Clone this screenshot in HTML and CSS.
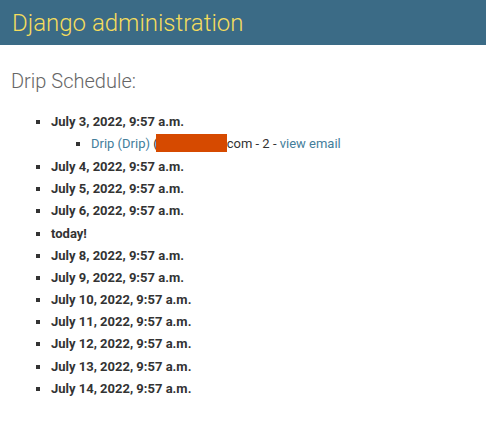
FILE: index.html
```html
<!DOCTYPE html>
<html>
<head>
<meta charset="utf-8">
<link rel="stylesheet" href="styles.css">
</head>
<body>
<div class="header"><h1 class="brand">Django administration</h1></div>
<div class="content">
  <h2 class="title">Drip Schedule:</h2>
  <ul class="days">
    <li><strong>July 3, 2022, 9:57 a.m.</strong>
      <ul class="sends">
        <li><a href="#">Drip (Drip)</a> (<span class="redact" aria-hidden="true"></span>com - 2 - <a href="#">view email</a></li>
      </ul>
    </li>
    <li><strong>July 4, 2022, 9:57 a.m.</strong></li>
    <li><strong>July 5, 2022, 9:57 a.m.</strong></li>
    <li><strong>July 6, 2022, 9:57 a.m.</strong></li>
    <li><strong>today!</strong></li>
    <li><strong>July 8, 2022, 9:57 a.m.</strong></li>
    <li><strong>July 9, 2022, 9:57 a.m.</strong></li>
    <li><strong>July 10, 2022, 9:57 a.m.</strong></li>
    <li><strong>July 11, 2022, 9:57 a.m.</strong></li>
    <li><strong>July 12, 2022, 9:57 a.m.</strong></li>
    <li><strong>July 13, 2022, 9:57 a.m.</strong></li>
    <li><strong>July 14, 2022, 9:57 a.m.</strong></li>
  </ul>
</div>
</body>
</html>
```
FILE: styles.css
```css
body {
  margin: 0;
  font-family: Roboto, "Liberation Sans", sans-serif;
  color: #333;
  background: #fff;
}
.header {
  height: 45px;
  background: #3b6b86;
  display: flex;
  align-items: center;
  padding: 0 12px;
}
.brand {
  margin: 0;
  font-size: 24px;
  font-weight: 300;
  color: #f5dd5d;
  line-height: 28px;
}
.content {
  padding: 24px 11px 20px;
}
.title {
  margin: 0 0 18px;
  font-size: 20px;
  font-weight: 300;
  color: #666;
  line-height: 24px;
}
.days, .sends {
  margin: 0;
  padding-left: 40px;
}
.days li {
  list-style-type: square;
  font-size: 13px;
  line-height: 20px;
  padding: 1px 0;
}
.days > li {
  padding: 1px 0 1.17px;
}
.days strong {
  font-weight: 700;
}
.sends li {
  font-weight: 400;
  padding: 2px 0 1px;
}
a {
  color: #447e9b;
  text-decoration: none;
}
.redact {
  display: inline-block;
  background: #d64a00;
  width: 71px;
  height: 18px;
  vertical-align: -4px;
  margin-left: -2px;
}
```
